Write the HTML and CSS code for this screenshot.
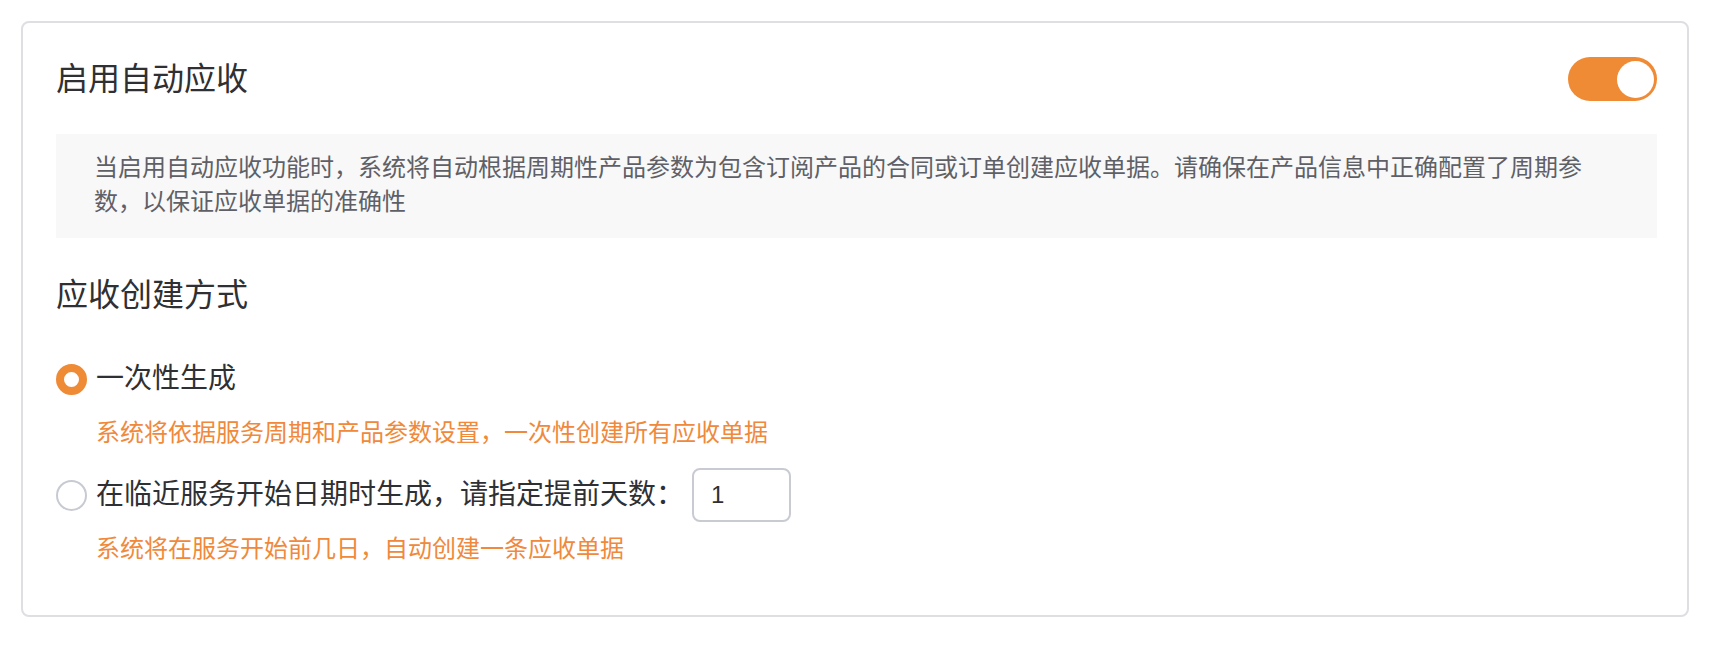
FILE: index.html
```html
<!DOCTYPE html>
<html lang="zh-CN">
<head>
    <meta charset="UTF-8">
    <meta name="viewport" content="width=device-width, initial-scale=1.0">
    <title>自动应收设置</title>
    <link rel="stylesheet" href="styles.css">
</head>
<body>

<div class="card">
    <!-- 开关 -->
    <div class="header">
        <h1 class="title">启用自动应收</h1>
        <span class="switch on"><span class="knob"></span></span>
    </div>

    <div class="notice">
        当启用自动应收功能时，系统将自动根据周期性产品参数为包含订阅产品的合同或订单创建应收单据。请确保在产品信息中正确配置了周期参数，以保证应收单据的准确性
    </div>

    <!-- 应收创建方式 -->
    <h2 class="title section">应收创建方式</h2>

    <div class="option first">
        <span class="radio checked"></span>
        <span class="label">一次性生成</span>
    </div>
    <p class="hint hint-first">系统将依据服务周期和产品参数设置，一次性创建所有应收单据</p>

    <div class="option second">
        <span class="radio"></span>
        <span class="label">在临近服务开始日期时生成，请指定提前天数：</span>
        <input class="days" type="text" value="1">
    </div>
    <p class="hint hint-second">系统将在服务开始前几日，自动创建一条应收单据</p>
</div>

</body>
</html>
```

FILE: styles.css
```css
body {
    margin: 0;
    padding: 21px 0 0 21px;
    font-family: "Liberation Sans", "Noto Sans CJK SC", sans-serif;
    color: #2f3033;
    background: #fff;
}
.card {
    width: 1668px;
    box-sizing: border-box;
    border: 2px solid #dedee3;
    border-radius: 8px;
    padding: 34px 30px 48px 33px;
}
.header {
    display: flex;
    align-items: center;
    justify-content: space-between;
    height: 44px;
}
.title {
    margin: 0;
    font-size: 32px;
    font-weight: normal;
    line-height: 44px;
}
.switch {
    position: relative;
    width: 89px;
    height: 44px;
    border-radius: 22px;
    background-color: #ef8a35;
}
.switch .knob {
    position: absolute;
    top: 3.5px;
    right: 3.5px;
    width: 37px;
    height: 37px;
    border-radius: 50%;
    background: #fff;
}
.notice {
    margin-top: 33px;
    padding: 17px 38px 19px 38px;
    background-color: #f8f8f8;
    color: #5f6066;
    font-size: 24px;
    line-height: 34px;
}
.section {
    margin-top: 35px;
}
.option {
    display: flex;
    align-items: center;
}
.option.first {
    margin-top: 42px;
    height: 40px;
}
.option.second {
    margin-top: 17px;
    height: 54px;
}
.radio {
    width: 31px;
    height: 31px;
    box-sizing: border-box;
    border-radius: 50%;
    border: 2px solid #c8cad3;
    background: #fff;
    margin-right: 9px;
    flex-shrink: 0;
}
.radio.checked {
    border: 8px solid #ef8a35;
}
.label {
    font-size: 28px;
    line-height: 40px;
}
.days {
    width: 99px;
    height: 54px;
    box-sizing: border-box;
    margin-left: 8px;
    padding: 0 17px;
    border: 2px solid #c9cbd3;
    border-radius: 8px;
    font-family: "Liberation Sans", sans-serif;
    font-size: 24px;
    color: #2f3033;
    outline: none;
}
.hint {
    margin: 0;
    padding-left: 40px;
    color: #f0893b;
    font-size: 24px;
    line-height: 36px;
}
.hint-first {
    margin-top: 16px;
}
.hint-second {
    margin-top: 9px;
}
```
